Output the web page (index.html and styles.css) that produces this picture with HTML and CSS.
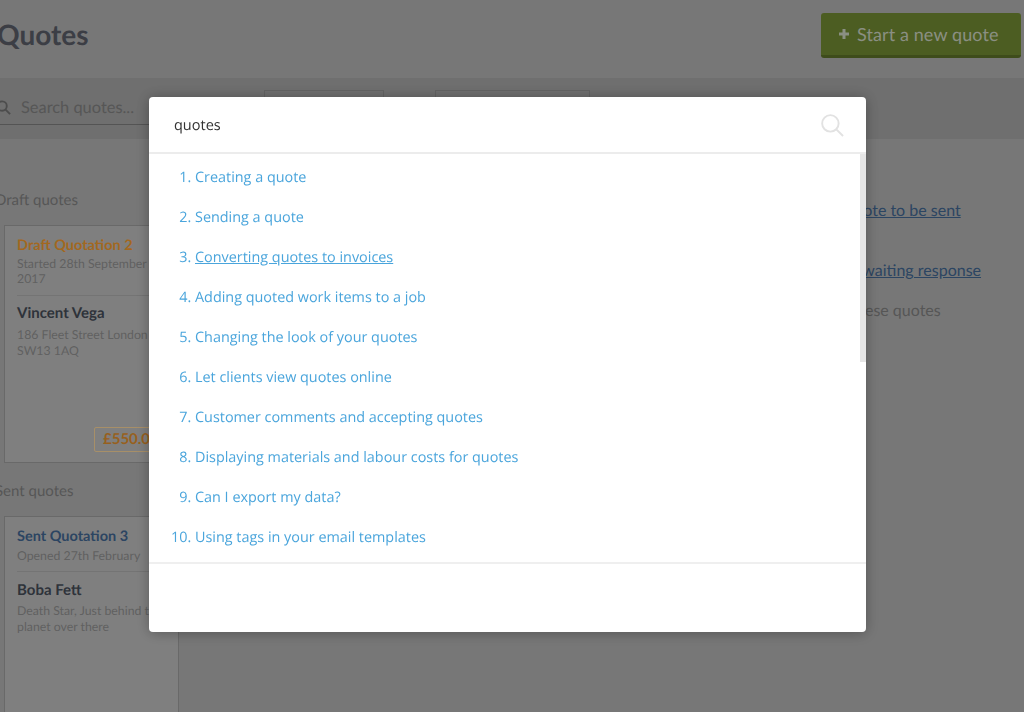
FILE: index.html
```html
<!DOCTYPE html>
<html lang="en">
<head>
<meta charset="utf-8">
<title>Quotes</title>
<link rel="stylesheet" href="styles.css">
</head>
<body>
<div class="page">
  <header class="top">
    <h1 class="title">Quotes</h1>
    <a class="new-btn"><svg class="plus" viewBox="0 0 12 12"><path d="M6 1v10M1 6h10"/></svg>Start a new quote</a>
  </header>
  <div class="toolbar">
    <div class="search">
      <svg class="search-icon" viewBox="0 0 16 16"><circle cx="6.5" cy="6.5" r="5"/><path d="M10.2 10.2 15 15"/></svg>
      <span>Search quotes...</span>
    </div>
    <div class="select select-a"></div>
    <div class="select select-b"></div>
  </div>
  <div class="content">
    <aside class="side">
      <h2 class="label">Draft quotes</h2>
      <article class="card card-draft">
        <h3 class="card-title draft">Draft Quotation 2</h3>
        <p class="card-sub">Started 28th September 2017</p>
        <h4 class="card-name">Vincent Vega</h4>
        <p class="card-addr">186 Fleet Street London SW13 1AQ</p>
        <span class="price">£550.00</span>
      </article>
      <h2 class="label label-sent">Sent quotes</h2>
      <article class="card card-sent">
        <h3 class="card-title sent">Sent Quotation 3</h3>
        <p class="card-sub">Opened 27th February</p>
        <h4 class="card-name">Boba Fett</h4>
        <p class="card-addr">Death Star, Just behind that planet over there</p>
      </article>
    </aside>
    <section class="notes">
      <a class="note note-1">1 quote to be sent</a>
      <a class="note note-2">1 quote awaiting response</a>
      <p class="note note-3">Archive these quotes</p>
    </section>
  </div>
</div>
<div class="overlay"></div>
<div class="modal">
  <div class="modal-head">
    <span class="query">quotes</span>
    <svg class="modal-icon" viewBox="0 0 24 24"><circle cx="9.8" cy="9.8" r="8.6"/><path d="M16 16l7 7"/></svg>
  </div>
  <div class="modal-body">
    <ol class="results">
      <li><a>Creating a quote</a></li>
      <li><a>Sending a quote</a></li>
      <li><a class="hover">Converting quotes to invoices</a></li>
      <li><a>Adding quoted work items to a job</a></li>
      <li><a>Changing the look of your quotes</a></li>
      <li><a>Let clients view quotes online</a></li>
      <li><a>Customer comments and accepting quotes</a></li>
      <li><a>Displaying materials and labour costs for quotes</a></li>
      <li><a>Can I export my data?</a></li>
      <li><a>Using tags in your email templates</a></li>
    </ol>
    <span class="thumb"></span>
  </div>
  <div class="modal-foot"></div>
</div>
</body>
</html>
```

FILE: styles.css
```css
* { box-sizing: border-box; }
html, body { height: 100%; }
body {
  margin: 0;
  overflow: hidden;
  background: #ababab;
  font-family: Lato, "Open Sans", sans-serif;
  color: #565a64;
  text-rendering: geometricPrecision;
}
.page { margin-left: -5px; width: 1029px; }
.top {
  height: 78px;
  display: flex;
  justify-content: space-between;
  align-items: flex-start;
  padding: 13px 3px 0 2px;
}
.title { margin: 3px 0 0; font-size: 28px; line-height: 36px; font-weight: 700; color: #565a64; }
.new-btn {
  width: 200px;
  height: 45px;
  display: flex;
  align-items: center;
  gap: 7px;
  padding-left: 17px;
  border-radius: 3px;
  background: #6e8631;
  border-bottom: 3px solid #596d28;
  color: #c6cdbc;
  font-size: 18px;
  font-weight: 400;
  letter-spacing: .1px;
}
.plus { width: 12px; height: 12px; fill: none; stroke: #c6cdbc; stroke-width: 3; }
.toolbar {
  height: 61px;
  background: #9f9f9f;
  display: flex;
  padding-top: 12px;
}
.search {
  width: 200px;
  height: 35px;
  display: flex;
  align-items: center;
  gap: 10px;
  border-bottom: 1px solid #797979;
  color: #7c7c7c;
  font-size: 16.4px;
  padding-left: 1px;
}
.search-icon { width: 15px; height: 15px; fill: none; stroke: #6e6e6e; stroke-width: 2; flex: none; }
.select { height: 40px; border: 1px solid #8e8e8e; }
.select-a { width: 120px; margin-left: 69px; }
.select-b { width: 155px; margin-left: 51px; }
.content { display: flex; }
.side { width: 185px; flex: none; }
.label { margin: 50px 0 0; font-size: 15px; line-height: 22px; font-weight: 400; color: #7c7c7c; }
.label-sent { margin-top: 17px; }
.card {
  margin: 14px 0 0 9px;
  width: 175px;
  background: #b7b7b7;
  border: 1px solid #979797;
  padding: 11px 12px;
  position: relative;
  overflow: hidden;
}
.card-draft { height: 238px; }
.card-sent { height: 300px; padding-right: 2px; }
.card-title { margin: 0; font-size: 14.5px; line-height: 18px; font-weight: 700; }
.draft { color: #e8952f; }
.sent { color: #40638d; }
.card-sub {
  margin: 1px 0 0;
  padding-bottom: 9px;
  border-bottom: 1px solid #a6a6a6;
  font-size: 12.3px;
  line-height: 15px;
  color: #8b8b8b;
}
.card-sent .card-sub { margin-top: 2px; padding-bottom: 8px; }
.card-name { margin: 8px 0 0; font-size: 15px; line-height: 19px; font-weight: 700; color: #434954; }
.card-sent .card-name { margin-top: 9px; }
.card-addr { margin: 4px 0 0; font-size: 12.3px; line-height: 16px; color: #8b8b8b; }
.card-sent .card-addr { margin-top: 3px; }
.price {
  position: absolute;
  left: 89px;
  top: 201px;
  padding: 0 8px;
  height: 25px;
  line-height: 23px;
  border: 1px solid #f0cd96;
  border-radius: 2px;
  font-size: 15px;
  font-weight: 700;
  color: #d98a2c;
  white-space: nowrap;
}
.notes { padding-top: 62px; font-size: 16px; line-height: 20px; }
.note { display: block; margin: 0; color: #40638d; text-decoration: underline; white-space: nowrap; }
.note-1 { margin-left: 652px; }
.note-2 { margin-left: 616px; margin-top: 40px; }
.note-3 { margin-left: 613px; margin-top: 20px; color: #7c7c7c; text-decoration: none; }
.overlay {
  position: fixed;
  inset: 0;
  background: rgba(0, 0, 0, .3);
}
.modal {
  position: fixed;
  left: 149px;
  top: 97px;
  width: 717px;
  height: 535px;
  display: flex;
  flex-direction: column;
  background: #fff;
  border-radius: 4px;
  box-shadow: 0 1px 14px rgba(0, 0, 0, .3);
  font-family: "Open Sans", sans-serif;
}
.modal-head {
  height: 57px;
  flex: none;
  display: flex;
  align-items: center;
  justify-content: space-between;
  padding: 2px 22px 0 25px;
  border-bottom: 2px solid #ececec;
}
.query { font-size: 14.5px; color: #333; }
.modal-icon { width: 23px; height: 23px; fill: none; stroke: #e2e2e2; stroke-width: 2; }
.modal-body { position: relative; height: 408px; flex: none; overflow: hidden; }
.results {
  margin: 0;
  padding: 4px 0 0 46px;
  font-size: 14.4px;
  color: #4aa5dc;
}
.results li { height: 40px; line-height: 40px; }
.hover { text-decoration: underline; }
.thumb {
  position: absolute;
  right: 0;
  top: 0;
  width: 6px;
  height: 208px;
  background: #e5e5e5;
}
.modal-foot { flex: 1; border-top: 2px solid #efefef; }
```
